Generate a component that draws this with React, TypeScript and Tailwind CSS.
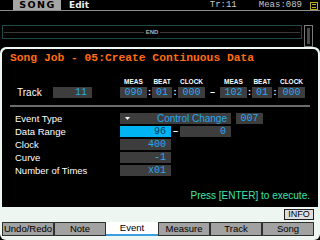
import React from 'react';

const mono = { fontFamily: '"Liberation Mono", "DejaVu Sans Mono", monospace' };
const sans = { fontFamily: '"Liberation Sans", Arial, sans-serif' };
const dejavu = { fontFamily: '"DejaVu Sans", "Liberation Sans", sans-serif' };

const Box = ({ w, children, align = 'right' }: { w: string; children: React.ReactNode; align?: 'right' | 'center' }) => (
  <div
    className={`${w} h-[11px] bg-[#3d3d3d] text-[#27a9ec] text-[10px] leading-[11px] flex items-center ${align === 'center' ? 'justify-center' : 'justify-end pr-[5px]'}`}
    style={mono}
  >
    {children}
  </div>
);

const Sep = ({ w, ch }: { w: string; ch: string }) => (
  <div className={`${w} h-[11px] flex items-center justify-center text-white text-[9px] font-bold`} style={sans}>
    {ch}
  </div>
);

const Header = ({ w, label }: { w: string; label: string }) => (
  <div className={`${w} text-center text-white font-bold text-[6.5px] leading-[7px]`} style={sans}>
    {label}
  </div>
);

const tabs = ['Undo/Redo', 'Note', 'Event', 'Measure', 'Track', 'Song'];

export default function App() {
  return (
    <div className="w-[320px] h-[240px] bg-black overflow-hidden flex flex-col">
      {/* top bar */}
      <div className="h-[11px] border-b border-[#8e8e8e] flex items-start">
        <div className="ml-[13px] w-[48px] h-[10px] bg-[#a6a6a6] flex items-center justify-center">
          <span className="text-black font-bold text-[9.5px] leading-[10px] tracking-[1.5px] pl-[1px]" style={dejavu}>SONG</span>
        </div>
        <span className="ml-[8px] text-[#ececec] font-bold text-[9px] leading-[10px]" style={dejavu}>Edit</span>
        <span className="ml-auto text-[#c8c8c8] text-[9px] leading-[10px]" style={mono}>Tr:11</span>
        <span className="ml-[22px] text-[#c8c8c8] text-[9px] leading-[10px]" style={mono}>Meas:089</span>
        <svg className="ml-[8px] mt-[2px] mr-[2px]" width="8" height="8" viewBox="0 0 8 8">
          <rect x="0.5" y="0.5" width="7" height="7" fill="none" stroke="#b9a92e" />
          <rect x="2" y="2" width="4" height="1" fill="#b9a92e" />
          <rect x="2" y="5" width="4" height="1" fill="#b9a92e" />
        </svg>
      </div>

      {/* track overview */}
      <div className="h-[36px] flex items-start">
        <div className="ml-[2px] mt-[14px] w-[300px] h-[14px] border border-[#1f4a47] flex items-center">
          <div className="flex-1 h-px bg-[#3a3a3a] ml-px" />
          <span className="px-[2px] text-[#b0b0b0] text-[6px] leading-[6px] font-bold" style={sans}>END</span>
          <div className="flex-1 h-px bg-[#3a3a3a] mr-px" />
        </div>
        <div className="ml-[2px] mt-[14px] w-[9px] h-[22px] border border-[#7c7c7c] p-[2px]">
          <div className="w-full h-full bg-[#4a4a4a]" />
        </div>
      </div>

      {/* dialog */}
      <div className="h-[193px] rounded-[6px] bg-[#eef6f2] px-[2px] pt-[2px] flex flex-col">
        <div className="h-[158px] bg-black rounded-t-[5px] flex flex-col">
          <div className="mt-[3px] pl-[8px] h-[12px] text-[#ff6c12] font-bold text-[11.3px] leading-[12px]" style={mono}>
            Song Job - 05:Create Continuous Data
          </div>

          {/* headers */}
          <div className="mt-[14px] h-[7px] flex pl-[118px]">
            <Header w="w-[27px]" label="MEAS" />
            <div className="w-[5px]" />
            <Header w="w-[20px]" label="BEAT" />
            <div className="w-[6px]" />
            <Header w="w-[27px]" label="CLOCK" />
            <div className="w-[15px]" />
            <Header w="w-[27px]" label="MEAS" />
            <div className="w-[5px]" />
            <Header w="w-[20px]" label="BEAT" />
            <div className="w-[6px]" />
            <Header w="w-[27px]" label="CLOCK" />
          </div>

          {/* track row */}
          <div className="mt-[2px] h-[11px] flex items-center pl-[15px]">
            <div className="w-[36px] text-white text-[10px] leading-[11px]" style={sans}>Track</div>
            <Box w="w-[39px]">11</Box>
            <div className="w-[28px]" />
            <Box w="w-[27px]" align="center">090</Box>
            <Sep w="w-[5px]" ch=":" />
            <Box w="w-[20px]" align="center">01</Box>
            <Sep w="w-[6px]" ch=":" />
            <Box w="w-[27px]" align="center">000</Box>
            <Sep w="w-[15px]" ch="–" />
            <Box w="w-[27px]" align="center">102</Box>
            <Sep w="w-[5px]" ch=":" />
            <Box w="w-[20px]" align="center">01</Box>
            <Sep w="w-[6px]" ch=":" />
            <Box w="w-[27px]" align="center">000</Box>
          </div>

          <div className="mt-[7px] ml-[8px] w-[300px] h-[2px] bg-[#6c6c6c]" />

          {/* parameter rows */}
          <div className="mt-[6px] pl-[13px] flex flex-col gap-[2px]">
            <div className="h-[11px] flex items-center">
              <div className="w-[105px] text-white text-[9.5px] leading-[11px]" style={sans}>Event Type</div>
              <div className="w-[111px] h-[11px] bg-[#3d3d3d] flex items-center pl-[5px] pr-[4px]">
                <svg width="5" height="3" viewBox="0 0 5 3"><path d="M0 0H5L2.5 3Z" fill="#fff" /></svg>
                <span className="ml-auto text-[#27a9ec] text-[10px] leading-[11px]" style={sans}>Control Change</span>
              </div>
              <div className="w-[5px]" />
              <Box w="w-[27px]" align="center">007</Box>
            </div>
            <div className="h-[11px] flex items-center">
              <div className="w-[105px] text-white text-[9.5px] leading-[11px]" style={sans}>Data Range</div>
              <div className="w-[51px] h-[11px] bg-[#00b3f2] text-[#003a5c] text-[10px] leading-[11px] flex items-center justify-end pr-[5px]" style={mono}>96</div>
              <Sep w="w-[9px]" ch="–" />
              <Box w="w-[51px]">0</Box>
            </div>
            <div className="h-[11px] flex items-center">
              <div className="w-[105px] text-white text-[9.5px] leading-[11px]" style={sans}>Clock</div>
              <Box w="w-[51px]">400</Box>
            </div>
            <div className="h-[11px] flex items-center">
              <div className="w-[105px] text-white text-[9.5px] leading-[11px]" style={sans}>Curve</div>
              <Box w="w-[51px]">-1</Box>
            </div>
            <div className="h-[11px] flex items-center">
              <div className="w-[105px] text-white text-[9.5px] leading-[11px]" style={sans}>Number of Times</div>
              <Box w="w-[51px]">x01</Box>
            </div>
          </div>

          <div className="mt-[15px] pr-[8px] text-right text-[#3fe6a6] text-[10px] leading-[10px]" style={sans}>
            Press [ENTER] to execute.
          </div>
        </div>

        {/* info */}
        <div className="h-[15px] flex justify-end items-start pt-[2px] pr-[4px]">
          <div className="w-[30px] h-[11px] bg-[#dedede] border border-[#1e1e1e] flex items-center justify-center text-black text-[9px] leading-[9px]" style={sans}>
            INFO
          </div>
        </div>

        {/* tabs */}
        <div className="h-[14px] flex">
          {tabs.map((t) =>
            t === 'Event' ? (
              <div key={t} className="w-[52px] h-[14px] bg-white border-b-2 border-[#3a9fe0] flex items-center justify-center text-black text-[9.5px] leading-[10px]" style={sans}>
                {t}
              </div>
            ) : (
              <div key={t} className="w-[52px] h-[14px] bg-[#a2a2a2] border border-[#303030] flex items-center justify-center text-black text-[9.5px] leading-[10px]" style={sans}>
                {t}
              </div>
            )
          )}
        </div>
      </div>
    </div>
  );
}
